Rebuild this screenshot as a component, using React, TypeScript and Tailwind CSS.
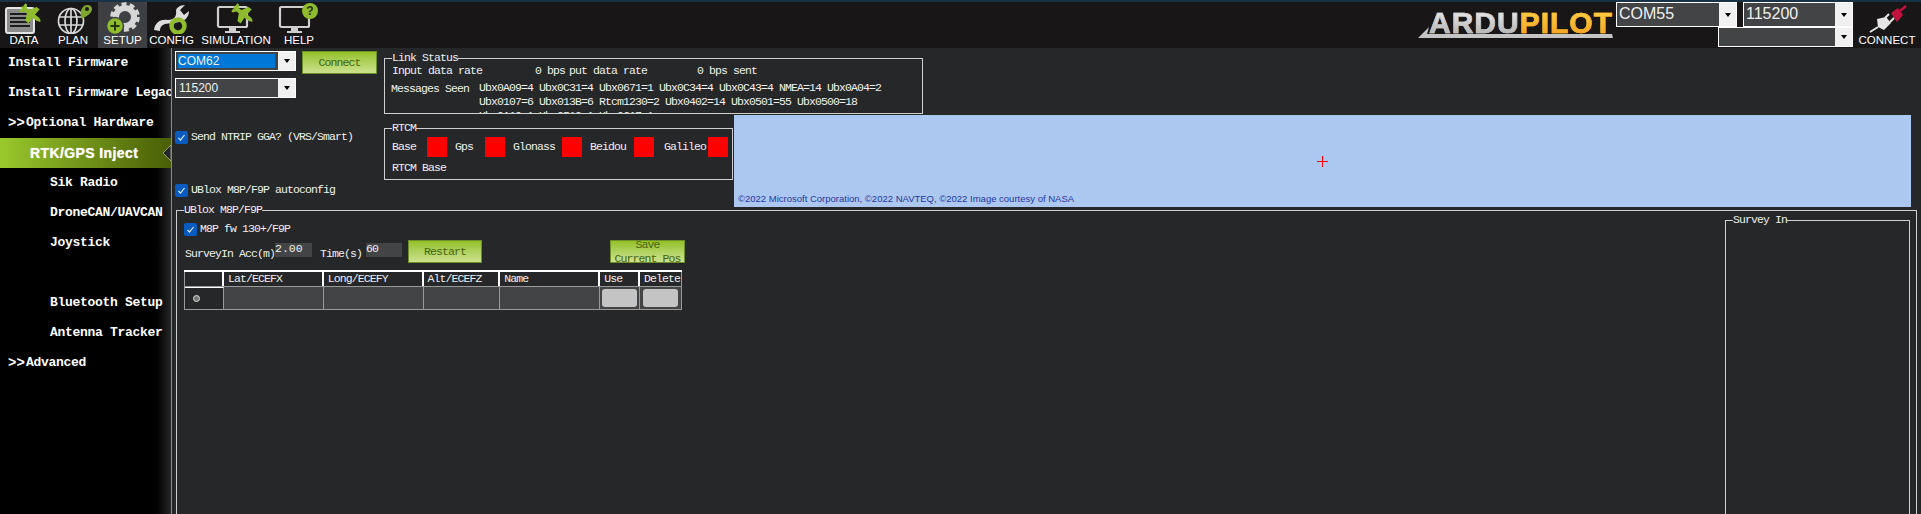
import React from "react";

const mono = "font-['Liberation_Mono',monospace] text-[11.5px] tracking-[-0.9px] text-[#f0f0f0]";
const arial = "font-['Liberation_Sans',Arial,sans-serif]";

const PlaneMark = ({ x, y, size = 24 }: { x: number; y: number; size?: number }) => (
  <g transform={`translate(${x} ${y}) scale(${size / 24}) rotate(38 12 12)`} fill="#8fbb2c">
    <path d="M0 12 C0 10.6 3 10 5 10 L20 10 C22.5 10.3 24 11.4 24 12 C24 12.6 22.5 13.7 20 14 L5 14 C3 14 0 13.4 0 12 Z" />
    <path d="M8 10.5 L12 3 L16 3 L15.5 10.5 Z M8 13.5 L12 21 L16 21 L15.5 13.5 Z M1 10.5 L1 7 L3 7 L5.5 10.5 Z M1 13.5 L1 17 L3 17 L5.5 13.5 Z" />
  </g>
);

const DataIcon = () => (
  <svg width="40" height="32" viewBox="0 0 40 32">
    <rect x="2" y="6" width="28" height="25" rx="2" fill="#8c8c8c" stroke="#e4e4e4" strokeWidth="2" />
    <path d="M6 12h20M6 16h20M6 20h20M6 24h20" stroke="#1d1d1d" strokeWidth="2" />
    <PlaneMark x={15} y={0} size={24} />
  </svg>
);

const PlanIcon = () => (
  <svg width="44" height="32" viewBox="0 0 44 32">
    <g fill="none" stroke="#d8d8d8" strokeWidth="1.7">
      <circle cx="20" cy="19" r="12.5" />
      <ellipse cx="20" cy="19" rx="6" ry="12.5" />
      <path d="M20 6.5v25M8 15h24M8 23h24" />
    </g>
    <path d="M31 17 C29 11 29 9 32 5 C34 2 41 2 41 7 C41 11 36 14 31 17 Z" fill="#7fa82a" />
    <circle cx="36" cy="7" r="2" fill="#1b1a1a" />
  </svg>
);

const SetupIcon = () => (
  <svg width="44" height="32" viewBox="0 0 44 32">
    <g fill="none" stroke="#d6d6d6">
      <circle cx="24" cy="15" r="9" strokeWidth="6" />
      <circle cx="24" cy="15" r="13" strokeWidth="3.5" strokeDasharray="5 3.2" />
    </g>
    <circle cx="14" cy="24" r="8.5" fill="#8fbb2c" stroke="#3d3f42" strokeWidth="1.5" />
    <path d="M14 19.5v9M9.5 24h9" stroke="#263208" strokeWidth="2" />
  </svg>
);

const ConfigIcon = () => (
  <svg width="40" height="32" viewBox="0 0 40 32">
    <path d="M2 28 C3 20 9 17 16 18 C22 18 25 14 24 9 C24 6 28 3 33 3 L28 8 L32 13 L37 9 C37 15 33 19 27 20 C21 22 18 21 13 22 C10 23 8 25 8 29 Z" fill="#dcdcdc" />
    <circle cx="26" cy="24" r="6.5" fill="none" stroke="#8fbb2c" strokeWidth="4.5" />
  </svg>
);

const Monitor = () => (
  <g>
    <rect x="2" y="5" width="29" height="20" rx="1.5" fill="none" stroke="#cfcfcf" strokeWidth="2.2" />
    <path d="M13 26h7v3h-7zM9 29h15v2H9z" fill="#cfcfcf" />
  </g>
);

const SimIcon = () => (
  <svg width="40" height="32" viewBox="0 0 40 32">
    <Monitor />
    <PlaneMark x={15} y={0} size={24} />
  </svg>
);

const HelpIcon = () => (
  <svg width="42" height="32" viewBox="0 0 42 32">
    <Monitor />
    <circle cx="32" cy="9" r="8" fill="#8fbb2c" />
    <text x="32" y="13" textAnchor="middle" fontFamily="Liberation Sans" fontWeight="700" fontSize="12" fill="#26300a">?</text>
  </svg>
);

const PlugIcon = () => (
  <svg width="40" height="28" viewBox="0 0 40 28">
    <path d="M24 8 L31 3 L36 10 L30 17 Z" fill="#c0123c" />
    <path d="M33 6 L39 1" stroke="#c0123c" strokeWidth="2.5" />
    <path d="M10 14 L19 12 L24 18 L17 25 L11 22 Z" fill="#e6e6e6" />
    <path d="M18 13 L22 9M23 17 L27 13M11 22 L3 27" stroke="#e6e6e6" strokeWidth="2" />
  </svg>
);

const navItems = [
  { label: "DATA", icon: <DataIcon />, w: "w-[48px]" },
  { label: "PLAN", icon: <PlanIcon />, w: "w-[50px]" },
  { label: "SETUP", icon: <SetupIcon />, w: "w-[49px] bg-[#3d3f42]" },
  { label: "CONFIG", icon: <ConfigIcon />, w: "w-[49px]" },
  { label: "SIMULATION", icon: <SimIcon />, w: "w-[80px]" },
  { label: "HELP", icon: <HelpIcon />, w: "w-[46px]" },
];

const Arrow = () => <span className="w-0 h-0 border-x-[3px] border-x-transparent border-t-[4px] border-t-black" />;

const TopCombo = ({ value, className }: { value: string; className: string }) => (
  <div className={`flex border border-white bg-[#434446] ${className}`}>
    <span className={`flex-1 pl-[2px] text-[16px] leading-[22px] text-[#f0f0f0] ${arial}`}>{value}</span>
    <span className="w-[17px] bg-[#f0f0f0] flex items-center justify-center"><Arrow /></span>
  </div>
);

const Logo = () => (
  <div className="relative w-[198px] h-[36px] mt-[4px]">
    <div className={`flex justify-end text-[30px] leading-[34px] font-bold tracking-[1px] ${arial}`}>
      <span className="bg-gradient-to-b from-[#f4f4f4] to-[#a9a9a9] bg-clip-text text-transparent [-webkit-text-stroke:0.6px_#c8c8c8]">ARDU</span>
      <span className="bg-gradient-to-b from-[#ffd84a] to-[#f09a1a] bg-clip-text text-transparent [-webkit-text-stroke:0.6px_#f7b32c]">PILOT</span>
    </div>
    <svg className="absolute left-0 top-0" width="198" height="36" viewBox="0 0 198 36">
      <path d="M3 32 L14 21 L12 28 L197 28 L198 32 Z" fill="#c4c4c4" />
    </svg>
  </div>
);

const Header = () => (
  <header className="flex h-[48px] border-t-2 border-[#183247] bg-[#181616]">
    {navItems.map((n) => (
      <div key={n.label} className={`flex flex-col items-center ${n.w}`}>
        <div className="h-[31px] flex items-center justify-center">{n.icon}</div>
        <span className={`text-[11.5px] leading-[12px] text-white mt-[1px] whitespace-nowrap ${arial}`}>{n.label}</span>
      </div>
    ))}
    <div className="ml-auto flex">
      <Logo />
      <div className="relative w-[237px] ml-[3px] h-[46px]">
        <div className="flex gap-[6px]">
          <TopCombo value="COM55" className="w-[121px] h-[25px]" />
          <TopCombo value="115200" className="w-[110px] h-[25px]" />
        </div>
        <div className="absolute left-[102px] top-[25px]">
          <TopCombo value="" className="w-[135px] h-[20px]" />
        </div>
      </div>
      <div className="w-[68px] flex flex-col items-center">
        <div className="h-[31px] flex items-end"><PlugIcon /></div>
        <span className={`text-[11.5px] leading-[12px] text-white mt-[1px] ${arial}`}>CONNECT</span>
      </div>
    </div>
  </header>
);

const menu = [
  { label: "Install Firmware", pad: "pl-[8px]" },
  { label: "Install Firmware Legacy", pad: "pl-[8px]" },
  { label: "Optional Hardware", pad: "pl-[8px]", more: true },
  { label: "RTK/GPS Inject", active: true },
  { label: "Sik Radio", pad: "pl-[50px]" },
  { label: "DroneCAN/UAVCAN", pad: "pl-[50px]" },
  { label: "Joystick", pad: "pl-[50px]" },
  { label: "", pad: "pl-[50px]" },
  { label: "Bluetooth Setup", pad: "pl-[50px]" },
  { label: "Antenna Tracker", pad: "pl-[50px]" },
  { label: "Advanced", pad: "pl-[8px]", more: true },
];

const Sidebar = () => (
  <aside className="w-[172px] shrink-0 border-r border-[#8a8a8a] bg-gradient-to-r from-black from-[87%] to-[#262729] overflow-hidden">
    {menu.map((m, i) =>
      m.active ? (
        <div key={i} className="relative h-[30px] flex items-center pl-[30px] bg-gradient-to-r from-[#9ac92c] to-[#4a5f07]">
          <span className={`text-[14px] font-bold text-white tracking-[0.4px] [text-shadow:0_0_1px_#dfe9c0] ${arial}`}>{m.label}</span>
          <svg className="absolute right-0 top-[7px]" width="8" height="16" viewBox="0 0 8 16">
            <path d="M8 0 L0 8 L8 16 Z" fill="#262729" stroke="#cfd6bc" strokeWidth="0.6" />
          </svg>
        </div>
      ) : (
        <div key={i} className={`h-[30px] flex items-center whitespace-nowrap font-['Liberation_Mono',monospace] font-bold text-[13px] tracking-[-0.3px] text-white ${m.pad}`}>
          {m.more && <span className="w-[18px] text-[14px] tracking-[0px]">&gt;&gt;</span>}
          {m.label}
        </div>
      )
    )}
  </aside>
);

const Combo = ({ value, selected }: { value: string; selected?: boolean }) => (
  <div className="flex w-[121px] h-[20px] border border-white bg-[#434446]">
    <span className={`flex-1 flex items-center ${arial} text-[12px] text-[#f0f0f0] ${selected ? "m-[2px] mr-[3px] bg-[#0078d7]" : "pl-[3px]"}`}>{value}</span>
    <span className="w-[17px] bg-[#f0f0f0] flex items-center justify-center"><Arrow /></span>
  </div>
);

const GreenButton = ({ children, className }: { children: React.ReactNode; className: string }) => (
  <button className={`font-['Liberation_Mono',monospace] text-[11.5px] tracking-[-0.9px] text-[#47650f] border border-[#6e8d2b] bg-gradient-to-b from-[#94c11f] to-[#cde28d] overflow-hidden whitespace-nowrap ${className}`}>
    {children}
  </button>
);

const Check = ({ label, className }: { label: string; className?: string }) => (
  <div className={`flex items-center gap-[3px] ${className ?? ""}`}>
    <span className="w-[13px] h-[13px] rounded-[2px] bg-[#0a5bc0] flex items-center justify-center">
      <svg width="9" height="9" viewBox="0 0 9 9"><path d="M1.5 5 L3.5 7 L7.5 2" fill="none" stroke="#dbe8fa" strokeWidth="1.2" /></svg>
    </span>
    <span className={`${mono} -mt-[2px] whitespace-nowrap`}>{label}</span>
  </div>
);

const Group = ({ title, className, children }: { title: string; className: string; children?: React.ReactNode }) => (
  <fieldset className={`border border-[#d0d0d0] min-w-0 ${className}`}>
    <legend className={`ml-[7px] p-0 leading-[12px] ${mono}`}>{title}</legend>
    {children}
  </fieldset>
);

const Signal = ({ label, w }: { label: string; w: string }) => (
  <div className="flex items-center">
    <span className={`${mono} ${w}`}>{label}</span>
    <span className="w-[20px] h-[20px] bg-[#ff0000]" />
  </div>
);

const columns = [
  { name: "Lat/ECEFX", w: "w-[100px]" },
  { name: "Long/ECEFY", w: "w-[100px]" },
  { name: "Alt/ECEFZ", w: "w-[77px]" },
  { name: "Name", w: "w-[100px]" },
  { name: "Use", w: "w-[40px]" },
  { name: "Delete", w: "w-[41px]" },
];

const BaseTable = () => (
  <div className="w-[498px] mt-[7px] border-t-2 border-white">
    <div className="flex h-[14px] border-r border-[#999]">
      <div className="w-[40px] border-l border-[#999] border-r-2 border-r-white" />
      {columns.map((c) => (
        <div key={c.name} className={`${c.w} ${mono} pl-[4px] leading-[14px] border-r-2 border-white last:border-r-0 overflow-hidden whitespace-nowrap`}>{c.name}</div>
      ))}
    </div>
    <div className="flex h-[24px] border border-[#999]">
      <div className="w-[39px] bg-[#262729] border-r border-[#999] border-t border-t-white flex items-center justify-center pr-[14px]">
        <span className="w-[7px] h-[7px] rounded-full bg-[#777] border border-[#ddd]" />
      </div>
      {columns.map((c) => (
        <div key={c.name} className={`${c.w} bg-[#434446] border-r border-[#999] last:border-r-0 flex items-center justify-center`}>
          {(c.name === "Use" || c.name === "Delete") && <span className="w-[35px] h-[18px] rounded-[3px] bg-[#c4c4c4]" />}
        </div>
      ))}
    </div>
  </div>
);

const Content = () => (
  <div className="flex-1 min-w-0 bg-[#262729]">
    <div className="flex">
      <div className="w-[212px] shrink-0 pl-[3px] pt-[3px]">
        <div className="flex gap-[6px]">
          <div className="flex flex-col gap-[7px]">
            <Combo value="COM62" selected />
            <Combo value="115200" />
          </div>
          <GreenButton className="w-[75px] h-[23px]">Connect</GreenButton>
        </div>
        <Check label="Send NTRIP GGA? (VRS/Smart)" className="mt-[32px]" />
        <Check label="UBlox M8P/F9P autoconfig" className="mt-[38px]" />
      </div>
      <div className="flex-1 min-w-0 pt-[4px]">
        <Group title="Link Status" className="w-[539px] h-[62px] overflow-hidden">
          <div className={`${mono} pl-[7px] leading-[14px] whitespace-pre flex`}>
            <span className="w-[143px]">Input data rate</span>
            <span className="w-[34px]">0 bps</span>
            <span className="w-[128px]">put data rate</span>
            <span className="w-[36px]">0 bps</span>
            <span>sent</span>
          </div>
          <div className={`${mono} flex pl-[6px] leading-[14px] whitespace-pre mt-[3px]`}>
            <span className="w-[88px] mt-[1px]">Messages Seen</span>
            <div>
              <div>Ubx0A09=4 Ubx0C31=4 Ubx0671=1 Ubx0C34=4 Ubx0C43=4 NMEA=14 Ubx0A04=2</div>
              <div>Ubx0107=6 Ubx013B=6 Rtcm1230=2 Ubx0402=14 Ubx0501=55 Ubx0500=18</div>
              <div>Ubx0A10=1 Ubx0510=1 Ubx0617=1</div>
            </div>
          </div>
        </Group>
        <div className="flex items-start">
          <Group title="RTCM" className="w-[349px] h-[58px] mt-[8px]">
            <div className="flex mt-[3px] pl-[7px]">
              <Signal label="Base" w="w-[35px]" />
              <span className="w-[8px]" />
              <Signal label="Gps" w="w-[30px]" />
              <span className="w-[8px]" />
              <Signal label="Glonass" w="w-[49px]" />
              <span className="w-[8px]" />
              <Signal label="Beidou" w="w-[44px]" />
              <span className="w-[10px]" />
              <Signal label="Galileo" w="w-[44px]" />
            </div>
            <div className={`${mono} mt-[4px] pl-[7px] leading-[14px]`}>RTCM Base</div>
          </Group>
          <div className="relative flex-1 h-[92px] mt-px ml-px mr-[10px] bg-[#adc8f0]">
            <svg className="absolute left-[583px] top-[41px]" width="11" height="11" viewBox="0 0 11 11">
              <path d="M5.5 0v11M0 5.5h11" stroke="#ff0000" strokeWidth="1" />
            </svg>
            <span className={`absolute left-[4px] bottom-[3px] text-[9.5px] leading-[10px] text-[#27379c] ${arial}`}>
              ©2022 Microsoft Corporation, ©2022 NAVTEQ, ©2022 Image courtesy of NASA
            </span>
          </div>
        </div>
      </div>
    </div>
    <fieldset className="border border-[#d0d0d0] min-w-0 ml-[4px] mr-[4px] h-[340px]">
      <legend className={`ml-[7px] p-0 leading-[6px] ${mono}`}>UBlox M8P/F9P</legend>
      <div className="flex">
        <div className="pl-[7px] pt-[9px]">
          <Check label="M8P fw 130+/F9P" />
          <div className="flex items-start mt-[3px]">
            <span className={`${mono} w-[90px] ml-px mt-[7px] leading-[14px] whitespace-nowrap`}>SurveyIn Acc(m)</span>
            <span className={`${mono} w-[37px] h-[14px] mt-[3px] bg-[#434446] leading-[12px] tracking-[0px]`}>2.00</span>
            <span className={`${mono} w-[42px] ml-[8px] mt-[7px] leading-[14px]`}>Time(s)</span>
            <span className={`${mono} w-[36px] h-[14px] mt-[3px] ml-[4px] bg-[#434446] leading-[12px]`}>60</span>
            <GreenButton className="w-[74px] h-[23px] ml-[6px]">Restart</GreenButton>
            <GreenButton className="w-[75px] h-[23px] ml-[128px] leading-[14px] flex flex-col items-center justify-center">
              <span>Save</span>
              <span>Current Pos</span>
            </GreenButton>
          </div>
          <BaseTable />
        </div>
        <Group title="Survey In" className="ml-auto mr-[6px] mt-px w-[185px] h-[320px]" />
      </div>
    </fieldset>
  </div>
);

export default function App() {
  return (
    <div className="w-[1921px] h-[514px] overflow-hidden bg-[#262729]">
      <Header />
      <div className="flex h-[466px]">
        <Sidebar />
        <Content />
      </div>
    </div>
  );
}
